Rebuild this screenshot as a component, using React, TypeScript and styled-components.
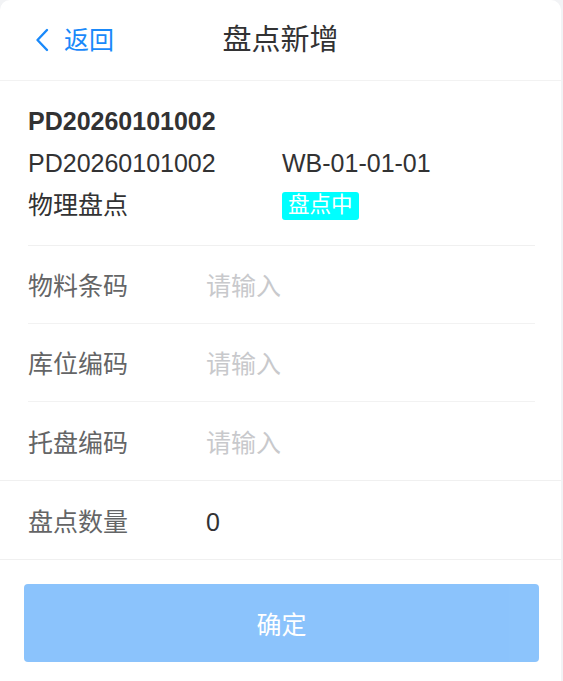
import React from "react";
import styled, { createGlobalStyle } from "styled-components";

const GlobalStyle = createGlobalStyle`
  html, body {
    margin: 0;
    padding: 0;
    background: #f2f3f5;
  }
  body {
    font-family: "Liberation Sans", "Noto Sans CJK SC", sans-serif;
    color: #323233;
  }
  * { box-sizing: border-box; }
`;

const Page = styled.div`
  width: 561px;
  min-height: 681px;
  background: #ffffff;
  border-radius: 10px 10px 0 0;
  overflow: hidden;
`;

const NavBar = styled.header`
  height: 81px;
  display: grid;
  grid-template-columns: 1fr auto 1fr;
  align-items: center;
  border-bottom: 1px solid #f2f2f2;
`;

const BackButton = styled.button`
  justify-self: start;
  display: flex;
  align-items: center;
  gap: 15px;
  padding: 0 0 0 35px;
  border: none;
  background: none;
  color: #1989fa;
  font-family: "Liberation Sans", "Noto Sans CJK SC", sans-serif;
  font-size: 25px;
  line-height: 1;
  cursor: pointer;
`;

const Title = styled.h1`
  margin: 0;
  font-size: 29px;
  font-weight: 400;
  color: #323233;
  line-height: 1;
`;

const InfoSection = styled.section`
  margin: 0 26px 0 28px;
  padding: 19px 0 19px;
  border-bottom: 1px solid #f0f0f0;
  display: grid;
  grid-template-columns: 254px 1fr;
  grid-auto-rows: 42px;
  align-items: center;
`;

const InfoText = styled.div<{ $bold?: boolean; $full?: boolean }>`
  font-size: 25px;
  font-weight: ${(p) => (p.$bold ? 700 : 400)};
  color: #323233;
  line-height: 1;
  grid-column: ${(p) => (p.$full ? "1 / -1" : "auto")};
`;

const Tag = styled.span`
  justify-self: start;
  display: inline-flex;
  align-items: center;
  height: 28px;
  margin-top: 2px;
  padding: 0 6px;
  border-radius: 3px;
  background: #00ffff;
  color: #ffffff;
  font-size: 21.5px;
  line-height: 1;
`;

const FormGroup = styled.div`
  border-bottom: 1px solid #f0f0f0;
`;

const Field = styled.label`
  display: flex;
  align-items: center;
  height: 78px;
  padding-top: 4px;
  margin: 0 26px 0 28px;
  border-bottom: 1px solid #f2f2f2;
  &:last-child {
    border-bottom: none;
  }
`;

const FieldLabel = styled.span`
  width: 178px;
  flex-shrink: 0;
  font-size: 25px;
  color: #646566;
  line-height: 1;
`;

const FieldInput = styled.input`
  flex: 1;
  min-width: 0;
  border: none;
  outline: none;
  padding: 0;
  background: transparent;
  font-family: "Liberation Sans", "Noto Sans CJK SC", sans-serif;
  font-size: 25px;
  color: #323233;
  &::placeholder {
    color: #c8c9cc;
  }
`;

const FieldValue = styled.span`
  font-size: 25px;
  color: #323233;
  line-height: 1;
`;

const Footer = styled.div`
  padding: 24px 22px 0 24px;
`;

const SubmitButton = styled.button`
  width: 100%;
  height: 78px;
  border: none;
  border-radius: 4px;
  background: #1989fa;
  opacity: 0.5;
  color: #ffffff;
  font-family: "Liberation Sans", "Noto Sans CJK SC", sans-serif;
  font-size: 25px;
`;

const ChevronLeft = () => (
  <svg width="14" height="24" viewBox="0 0 14 24" fill="none">
    <path
      d="M12 2 L2.5 12 L12 22"
      stroke="#1989fa"
      strokeWidth="2.4"
      strokeLinecap="round"
      strokeLinejoin="round"
    />
  </svg>
);

const inputs = ["物料条码", "库位编码", "托盘编码"];

export default function App() {
  return (
    <>
      <GlobalStyle />
      <Page>
        <NavBar>
          <BackButton>
            <ChevronLeft />
            返回
          </BackButton>
          <Title>盘点新增</Title>
          <span />
        </NavBar>
        <InfoSection>
          <InfoText $bold $full>
            PD20260101002
          </InfoText>
          <InfoText>PD20260101002</InfoText>
          <InfoText>WB-01-01-01</InfoText>
          <InfoText>物理盘点</InfoText>
          <Tag>盘点中</Tag>
        </InfoSection>
        <FormGroup>
          {inputs.map((label) => (
            <Field key={label}>
              <FieldLabel>{label}</FieldLabel>
              <FieldInput placeholder="请输入" />
            </Field>
          ))}
        </FormGroup>
        <FormGroup>
          <Field>
            <FieldLabel>盘点数量</FieldLabel>
            <FieldValue>0</FieldValue>
          </Field>
        </FormGroup>
        <Footer>
          <SubmitButton>确定</SubmitButton>
        </Footer>
      </Page>
    </>
  );
}
